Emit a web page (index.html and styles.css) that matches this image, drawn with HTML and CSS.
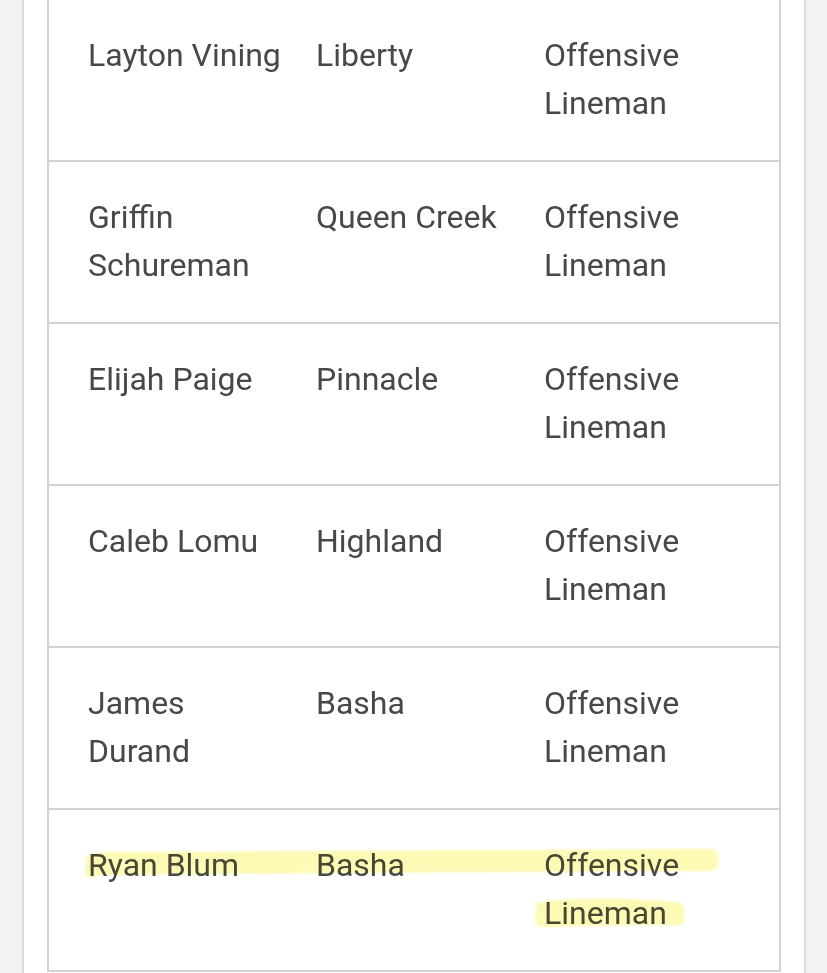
FILE: index.html
```html
<!DOCTYPE html>
<html lang="en">
<head>
<meta charset="utf-8">
<title>Roster</title>
<link rel="stylesheet" href="styles.css">
</head>
<body>
<div class="card">
  <table class="roster">
    <colgroup>
      <col class="c-name">
      <col class="c-school">
      <col class="c-pos">
    </colgroup>
    <tbody>
      <tr><td>Layton Vining</td><td>Liberty</td><td>Offensive Lineman</td></tr>
      <tr><td>Griffin Schureman</td><td>Queen Creek</td><td>Offensive Lineman</td></tr>
      <tr><td>Elijah Paige</td><td>Pinnacle</td><td>Offensive Lineman</td></tr>
      <tr><td>Caleb Lomu</td><td>Highland</td><td>Offensive Lineman</td></tr>
      <tr><td>James Durand</td><td>Basha</td><td>Offensive Lineman</td></tr>
      <tr><td>Ryan Blum</td><td>Basha</td><td>Offensive Lineman</td></tr>
    </tbody>
  </table>
</div>
<svg class="marker" width="827" height="973" viewBox="0 0 827 973" aria-hidden="true">
  <defs>
    <filter id="soft" x="-5%" y="-50%" width="110%" height="200%">
      <feGaussianBlur stdDeviation="1"/>
    </filter>
  </defs>
  <g filter="url(#soft)" fill="#fcfab4">
    <path d="M86,857 C 90,853 100,852 110,852 C 300,851 500,850 712,849 C 718,850 719,858 718,866 C 717,870 712,871 705,871 C 500,872 300,873 100,875 C 92,878 86,880 85,872 Z"/>
    <path d="M537,903 C 560,898 620,897 678,902 C 685,904 685,912 684,920 C 683,926 676,926 668,925 C 620,925 580,926 545,927 C 537,928 535,922 535,914 Z"/>
  </g>
</svg>
</body>
</html>
```

FILE: styles.css
```css
html, body {
  margin: 0;
  padding: 0;
}

body {
  position: relative;
  background: #f2f2f2;
  font-family: Roboto, "Liberation Sans", Arial, sans-serif;
  color: #484848;
  height: 973px;
  overflow: hidden;
}

.card {
  background: #ffffff;
  border-left: 2px solid #dcdcdc;
  border-right: 2px solid #dcdcdc;
  margin: -20px 21px 0 22px;
  padding: 18px 23px 40px 23px;
}

.roster {
  width: 734px;
  border-collapse: collapse;
  table-layout: fixed;
  border: 2px solid #d2d2d2;
}

.c-name { width: 235px; }
.c-school { width: 222px; }
.c-pos { width: auto; }

.roster tr {
  border-bottom: 2px solid #d2d2d2;
}

.roster td {
  vertical-align: top;
  padding: 31px 0 33px 39px;
  font-size: 32px;
  line-height: 48px;
  height: 96px;
  box-sizing: content-box;
}

.roster td:nth-child(2) {
  padding-left: 33px;
}

.roster td:last-child {
  padding-right: 40px;
}

.marker {
  position: absolute;
  left: 0;
  top: 0;
  pointer-events: none;
  mix-blend-mode: multiply;
}
```
